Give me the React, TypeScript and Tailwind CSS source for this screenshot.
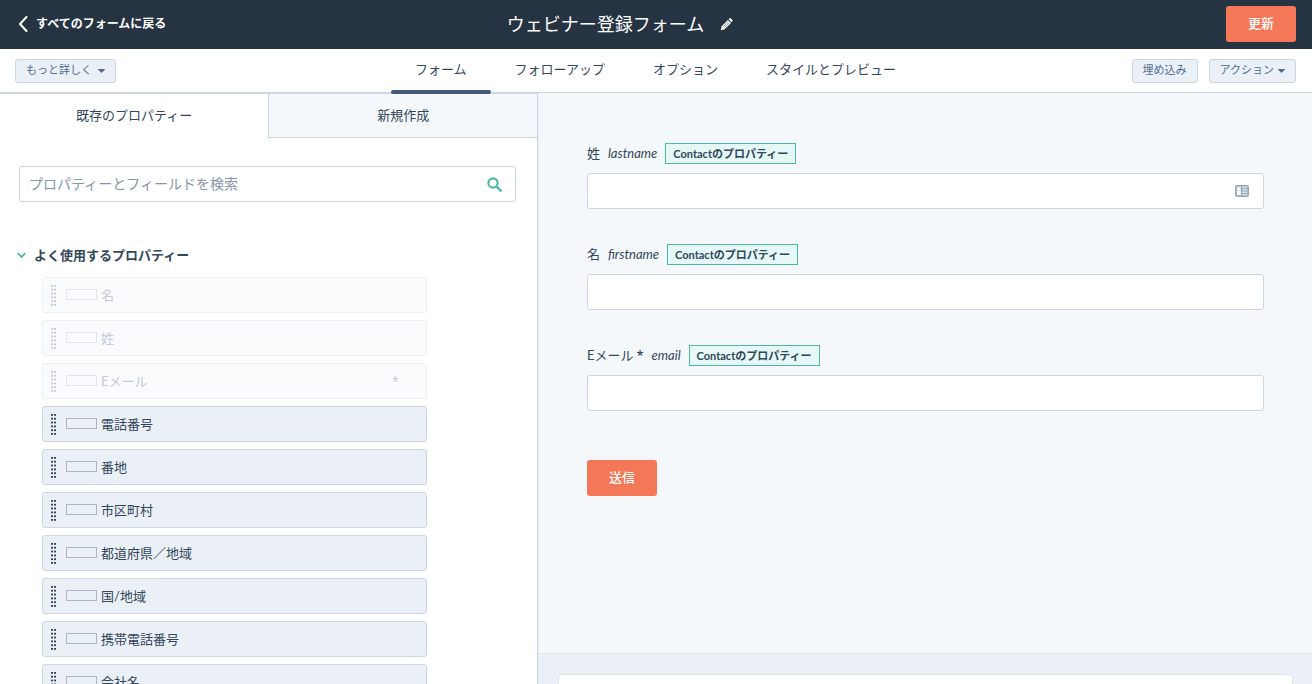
import React, { useState } from 'react';
import clsx from 'clsx';

type Property = { name: string; used?: boolean; required?: boolean };

const properties: Property[] = [
  { name: '名', used: true },
  { name: '姓', used: true },
  { name: 'Eメール', used: true, required: true },
  { name: '電話番号' },
  { name: '番地' },
  { name: '市区町村' },
  { name: '都道府県／地域' },
  { name: '国/地域' },
  { name: '携帯電話番号' },
  { name: '会社名' },
];

const fields = [
  { id: 'lastname', label: '姓', autofill: true },
  { id: 'firstname', label: '名' },
  { id: 'email', label: 'Eメール', required: true },
];

const navTabs = ['フォーム', 'フォローアップ', 'オプション', 'スタイルとプレビュー'];

const Caret = () => (
  <svg width="7" height="4" viewBox="0 0 7 4" className="mt-[2px] shrink-0" aria-hidden="true">
    <path d="M0.4 0h6.2c0.4 0 0.5 0.4 0.2 0.7L4 3.6c-0.3 0.3-0.7 0.3-1 0L0.2 0.7C-0.1 0.4 0 0 0.4 0z" fill="#506e91" />
  </svg>
);

const Grip = () => (
  <svg width="5" height="21" viewBox="0 0 5 21" className="shrink-0" aria-hidden="true">
    {[0, 3.8, 7.6, 11.5, 15.3, 19].map(y => (
      <g key={y} fill="currentColor">
        <rect x="0" y={y} width="2" height="1.8" />
        <rect x="3" y={y} width="2" height="1.8" />
      </g>
    ))}
  </svg>
);

const SmallButton = ({ children, className }: { children: React.ReactNode; className?: string }) => (
  <button
    type="button"
    className={clsx(
      'flex h-6 items-center rounded-[3px] border border-[#cbd6e2] bg-[#eaf0f6] px-[10px] pb-[2px] text-[11px] leading-4 text-[#506e91]',
      className
    )}
  >
    {children}
  </button>
);

const Header = () => (
  <header className="grid h-[49px] shrink-0 grid-cols-[1fr_auto_1fr] items-center bg-[#253342] px-4 pb-px text-white">
    <a href="#forms" className="flex items-center gap-2 pl-[2px] text-xs font-bold leading-4">
      <svg width="10" height="16" viewBox="0 0 10 16" fill="none" aria-hidden="true">
        <path d="M8.5 1L2 8l6.5 7" stroke="currentColor" strokeWidth="2" strokeLinecap="round" strokeLinejoin="round" />
      </svg>
      すべてのフォームに戻る
    </a>
    <div className="flex items-center gap-4 pr-[72px]">
      <h1 className="text-lg font-normal leading-6">ウェビナー登録フォーム</h1>
      <button type="button" aria-label="名前を編集">
        <svg width="13" height="13" viewBox="0 0 13 13" aria-hidden="true">
          <path d="M0.8 12.2l0.9-4L7.9 1.9l3.1 3.2-6.3 6.2z" fill="#fff" />
          <path d="M8.6 1.2l0.7-0.7c0.5-0.4 1.1-0.4 1.6 0l1.4 1.5c0.5 0.5 0.5 1.1 0 1.6l-0.7 0.7z" fill="#fff" />
          <path d="M3.4 8.5l5-5M4.6 9.7l5-5" stroke="#253342" strokeWidth="0.5" />
        </svg>
      </button>
    </div>
    <button type="button" className="h-9 justify-self-end rounded-[3px] bg-[#f47858] px-[22px] pb-[2px] text-[13px] font-medium leading-4">
      更新
    </button>
  </header>
);

const NavBar = () => {
  const [active, setActive] = useState(navTabs[0]);

  return (
    <div className="grid h-11 shrink-0 grid-cols-[1fr_auto_1fr] items-center border-b border-[#cbd6e2] bg-white pr-4 pl-[15px]">
      <SmallButton className="gap-[6px] justify-self-start">
        もっと詳しく
        <Caret />
      </SmallButton>
      <nav className="-mb-px flex h-11 self-start">
        {navTabs.map(tab => (
          <button
            key={tab}
            type="button"
            onClick={() => setActive(tab)}
            className={clsx(
              'relative px-6 pb-1 text-[13px] leading-5 text-[#33475b]',
              tab === active && 'z-10 after:absolute after:inset-x-0 after:-bottom-px after:h-1 after:rounded-[2px] after:bg-[#425b76]'
            )}
          >
            {tab}
          </button>
        ))}
      </nav>
      <div className="flex gap-[11px] justify-self-end">
        <SmallButton>埋め込み</SmallButton>
        <SmallButton className="gap-1">
          アクション
          <Caret />
        </SmallButton>
      </div>
    </div>
  );
};

const PropertyCard = ({ name, used, required }: Property) => (
  <li
    draggable={!used}
    className={clsx(
      'flex h-9 items-center rounded-[3px] border pl-2 text-[13px] leading-5',
      used ? 'border-dotted border-[#dfe6ee] bg-[#fafbfd] text-[#c2cbd6]' : 'cursor-move border-[#cbd6e2] bg-[#eaf0f6] text-[#33475b]'
    )}
  >
    <Grip />
    <span className={clsx('mr-1 mb-[2px] ml-[10px] h-[11px] w-[31px] border', used ? 'border-[#dfe6ed]' : 'border-[#a7b7c7]')} />
    <span>{name}</span>
    {required && <span className="mr-[27px] ml-auto font-['Open_Sans']">*</span>}
  </li>
);

const PropertyPanel = () => {
  const [open, setOpen] = useState(true);

  return (
    <aside className="flex w-[41%] shrink-0 flex-col border-r border-[#cbd6e2] bg-white">
      <div className="grid h-[45px] shrink-0 grid-cols-2 border-t border-[#cbd6e2] text-[13px] leading-5 text-[#33475b]">
        <button type="button" className="pb-[2px]">既存のプロパティー</button>
        <button type="button" className="border-b border-l border-[#cbd6e2] bg-[#f5f8fa] pb-px">新規作成</button>
      </div>
      <div className="min-h-0 flex-1 overflow-y-auto pt-7 pr-[21px] pl-[19px] [scrollbar-width:none]">
        <div className="flex h-9 items-center rounded-[3px] border border-[#cbd6e2] pr-[13px] pl-[9px]">
          <input
            type="search"
            aria-label="プロパティーとフィールドを検索"
            placeholder="プロパティーとフィールドを検索"
            className="min-w-0 flex-1 text-sm leading-5 text-[#33475b] outline-none placeholder:text-[#8497ab]"
          />
          <svg width="15" height="15" viewBox="0 0 15 15" fill="none" stroke="#4fb9a8" aria-hidden="true">
            <circle cx="6" cy="6" r="4.6" strokeWidth="2.2" />
            <path d="M9.5 9.5l4.2 4.2" strokeWidth="2.4" strokeLinecap="round" />
          </svg>
        </div>
        <button
          type="button"
          aria-expanded={open}
          onClick={() => setOpen(!open)}
          className="mt-[43px] -ml-[2px] flex items-center gap-2 text-[13px] font-bold leading-5 text-[#33475b]"
        >
          <svg width="9" height="7" viewBox="0 0 9 7" fill="none" aria-hidden="true">
            <path d="M1.2 1.7l3.3 3.3 3.3-3.3" stroke="#4fb9a8" strokeWidth="1.8" strokeLinecap="round" strokeLinejoin="round" />
          </svg>
          よく使用するプロパティー
        </button>
        {open && (
          <ul className="mt-3 mr-[89px] ml-[23px] flex flex-col gap-[7px] pb-6">
            {properties.map(p => (
              <PropertyCard key={p.name} {...p} />
            ))}
          </ul>
        )}
      </div>
    </aside>
  );
};

const FormPreview = () => (
  <main className="flex min-w-0 flex-1 flex-col overflow-y-auto border-l border-[#e6edf4] bg-[#f5f8fa] [scrollbar-width:none]">
    <form className="shrink-0 px-12 pt-[50px] pb-[157px]" onSubmit={e => e.preventDefault()}>
      <div className="flex flex-col gap-[35px]">
        {fields.map(f => (
          <div key={f.id}>
            <div className="flex items-center gap-2 text-[13px] leading-[21px] text-[#33475b]">
              <label htmlFor={f.id}>
                {f.label}
                {f.required && <span className="ml-[3px] font-['Open_Sans'] font-semibold">*</span>}
              </label>
              <em>{f.id}</em>
              <span className="border border-[#4fb9a8] bg-[#e5f8f6] px-[7px] text-[11px] font-bold leading-[19px]">Contactのプロパティー</span>
            </div>
            <div className="mt-[9px] flex h-9 items-center rounded-[3px] border border-[#cbd6e2] bg-white pr-[14px]">
              <input id={f.id} type="text" className="h-full min-w-0 flex-1 px-2 text-[13px] text-[#33475b] outline-none" />
              {f.autofill && (
                <svg width="14" height="12" viewBox="0 0 14 12" fill="none" aria-hidden="true">
                  <rect x="0.8" y="0.8" width="12.4" height="10.4" rx="1.2" fill="#dde3ea" stroke="#95a6b8" strokeWidth="1.6" />
                  <path d="M6.6 1v10" stroke="#95a6b8" strokeWidth="1.2" />
                  <path d="M7 3.6h6M7 6h6M7 8.6h6" stroke="#95a6b8" />
                  <circle cx="3.8" cy="4" r="1.3" fill="#fff" />
                  <path d="M2 9.6V7.4c0-0.9 0.6-1.4 1.8-1.4s1.9 0.5 1.9 1.4v2.2z" fill="#fff" />
                </svg>
              )}
            </div>
          </div>
        ))}
      </div>
      <button type="submit" className="mt-[49px] h-9 rounded-[3px] bg-[#f47858] px-[22px] pb-[2px] text-[13px] font-medium leading-4 text-white">
        送信
      </button>
    </form>
    <div className="flex-1 border-t border-[#dfe3eb] bg-[#eaf0f6] px-5 pt-[21px]">
      <div className="h-20 rounded-t-[3px] bg-white shadow-[0_0_1px_1px_#dfe3eb]" />
    </div>
  </main>
);

export default function App() {
  return (
    <div className="flex h-screen flex-col overflow-hidden bg-white font-[Lato,'Noto_Sans_CJK_JP',sans-serif]">
      <Header />
      <NavBar />
      <div className="flex min-h-0 flex-1">
        <PropertyPanel />
        <FormPreview />
      </div>
    </div>
  );
}
